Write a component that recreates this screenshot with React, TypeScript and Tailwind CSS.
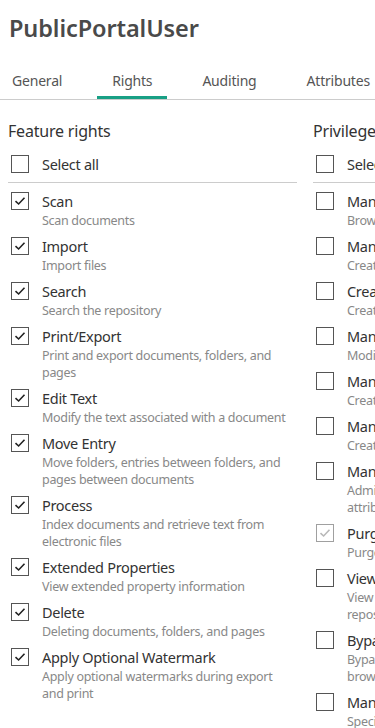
import React from 'react';

type Right = { name: string; desc: string; checked?: boolean; disabled?: boolean };

const featureRights: Right[] = [
  { name: 'Scan', desc: 'Scan documents', checked: true },
  { name: 'Import', desc: 'Import files', checked: true },
  { name: 'Search', desc: 'Search the repository', checked: true },
  { name: 'Print/Export', desc: 'Print and export documents, folders, and pages', checked: true },
  { name: 'Edit Text', desc: 'Modify the text associated with a document', checked: true },
  { name: 'Move Entry', desc: 'Move folders, entries between folders, and pages between documents', checked: true },
  { name: 'Process', desc: 'Index documents and retrieve text from electronic files', checked: true },
  { name: 'Extended Properties', desc: 'View extended property information', checked: true },
  { name: 'Delete', desc: 'Deleting documents, folders, and pages', checked: true },
  { name: 'Apply Optional Watermark', desc: 'Apply optional watermarks during export and print', checked: true },
];

// descriptions here use \n where the panel wraps them
const privileges: Right[] = [
  { name: 'Manage Entry Access', desc: 'Browse all entries' },
  { name: 'Manage Trustees', desc: 'Create and modify users' },
  { name: 'Create Trustees', desc: 'Create users and groups' },
  { name: 'Manage Templates', desc: 'Modify templates and fields' },
  { name: 'Manage Tags', desc: 'Create and modify tags' },
  { name: 'Manage Volumes', desc: 'Create and modify volumes' },
  { name: 'Manage Metadata', desc: 'Administer templates, fields, tags and\nattributes' },
  { name: 'Purge', desc: 'Purge deleted entries', checked: true, disabled: true },
  { name: 'View Audit Trail', desc: 'View audit events recorded for the\nrepository' },
  { name: 'Bypass Browse', desc: 'Bypass the restrictions on folder\nbrowse rights' },
  { name: 'Manage Watermarks', desc: 'Specify watermarks' },
];

function Check({ checked, disabled }: { checked?: boolean; disabled?: boolean }) {
  return (
    <span
      className={`mt-[1px] flex h-[18px] w-[18px] shrink-0 items-center justify-center border ${
        disabled ? 'border-[#a0a0a0]' : 'border-[#555]'
      } bg-white`}
    >
      {checked && (
        <svg width="12" height="10" viewBox="0 0 12 10" fill="none">
          <path
            d="M1.5 5.2 L4.6 8 L10.5 1.8"
            stroke={disabled ? '#b8b8b8' : '#222'}
            strokeWidth="1.6"
          />
        </svg>
      )}
    </span>
  );
}

function Column({ title, items }: { title: string; items: Right[] }) {
  return (
    <div className="w-[289px] shrink-0">
      <h2 className="text-[16px] leading-[22px] tracking-[-0.2px] text-[#333]">{title}</h2>
      <div className="flex items-start gap-[13px] pl-[3px] mt-[12px] pb-[8px] border-b border-[#ccc]">
        <Check />
        <span className="text-[14.5px] leading-[20px] tracking-[-0.3px] text-[#333] whitespace-nowrap">Select all</span>
      </div>
      <ul className="mt-[8px]">
        {items.map((it) => (
          <li key={it.name} className="flex items-start gap-[13px] pl-[3px] pb-[7px]">
            <Check checked={it.checked} disabled={it.disabled} />
            <div className="min-w-0 flex-1">
              <div className="text-[14.5px] leading-[20px] tracking-[-0.3px] whitespace-nowrap text-[#333]">
                {it.name}
              </div>
              <div className="mt-[1px] max-w-[250px] text-[12.5px] leading-[17px] tracking-[-0.3px] text-[#888] whitespace-pre-line">
                {it.desc}
              </div>
            </div>
          </li>
        ))}
      </ul>
    </div>
  );
}

export default function App() {
  return (
    <div
      className="h-[728px] w-[375px] overflow-hidden bg-white"
      style={{ fontFamily: '"Noto Sans", "Open Sans", sans-serif' }}
    >
      <h1 className="pl-[9px] pt-[12px] text-[23.5px] leading-[32px] font-semibold tracking-[-0.1px] text-[#4a4a4a]">
        PublicPortalUser
      </h1>
      <div className="mt-[26px] flex border-b border-[#ccc] whitespace-nowrap">
        <div className="-ml-[3px] flex gap-[20px]">
          {['General', 'Rights', 'Auditing', 'Attributes'].map((t) => (
            <div
              key={t}
              className={`px-[15px] pb-[4px] text-[14px] leading-[22px] tracking-[-0.2px] text-[#555] border-b-[3px] ${
                t === 'Rights' ? 'border-[#18a085]' : 'border-transparent'
              }`}
            >
              {t}
            </div>
          ))}
        </div>
      </div>
      <div className="mt-[20px] flex gap-[16px] pl-[8px]">
        <Column title="Feature rights" items={featureRights} />
        <Column title="Privileges" items={privileges} />
      </div>
    </div>
  );
}
